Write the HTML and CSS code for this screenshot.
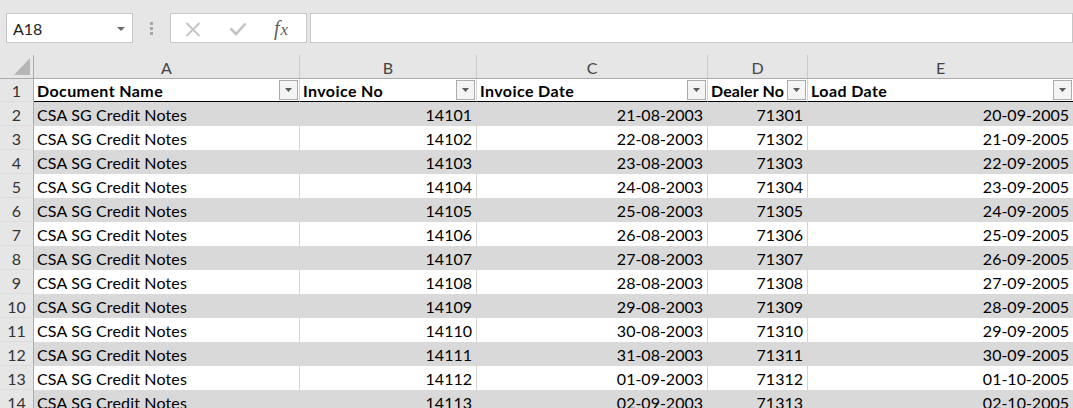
FILE: index.html
```html
<!DOCTYPE html>
<html>
<head>
<meta charset="utf-8">
<link rel="stylesheet" href="styles.css">
</head>
<body>
<div class="app">
  <div class="fbar">
    <div class="namebox">
      <span class="nb-text">A18</span>
      <svg class="nb-arrow" width="8" height="4" viewBox="0 0 8 4"><polygon points="0,0 8,0 4,4" fill="#6a6a6a"/></svg>
    </div>
    <div class="grip"><span></span><span></span><span></span></div>
    <div class="fbuttons">
      <svg class="ico-x" width="16" height="15" viewBox="0 0 16 15"><path d="M1.5 1 L14.5 14 M14.5 1 L1.5 14" stroke="#c3c3c3" stroke-width="1.8" fill="none"/></svg>
      <svg class="ico-check" width="18" height="14" viewBox="0 0 18 14"><path d="M1.5 6.5 L7 12 L16.5 1.5" stroke="#c3c3c3" stroke-width="2.6" fill="none"/></svg>
      <span class="fx"><span class="f">f</span><span class="x">x</span></span>
    </div>
    <div class="finput"></div>
  </div>

  <div class="sheet">
    <div class="corner"><svg width="16" height="17" viewBox="0 0 16 17"><polygon points="16,0 16,17 0,17" fill="#b6b6b6"/></svg></div>
    <div class="colhdr">A</div>
    <div class="colhdr">B</div>
    <div class="colhdr">C</div>
    <div class="colhdr">D</div>
    <div class="colhdr last">E</div>

    <div class="rowhdr r1">1</div>
    <div class="th"><span>Document Name</span><span class="flt"><svg width="7" height="4" viewBox="0 0 7 4"><polygon points="0,0 7,0 3.5,4" fill="#5c5c5c"/></svg></span></div>
    <div class="th"><span>Invoice No</span><span class="flt"><svg width="7" height="4" viewBox="0 0 7 4"><polygon points="0,0 7,0 3.5,4" fill="#5c5c5c"/></svg></span></div>
    <div class="th"><span>Invoice Date</span><span class="flt"><svg width="7" height="4" viewBox="0 0 7 4"><polygon points="0,0 7,0 3.5,4" fill="#5c5c5c"/></svg></span></div>
    <div class="th tight"><span>Dealer No</span><span class="flt"><svg width="7" height="4" viewBox="0 0 7 4"><polygon points="0,0 7,0 3.5,4" fill="#5c5c5c"/></svg></span></div>
    <div class="th last"><span>Load Date</span><span class="flt"><svg width="7" height="4" viewBox="0 0 7 4"><polygon points="0,0 7,0 3.5,4" fill="#5c5c5c"/></svg></span></div>

    <div class="rowhdr">2</div><div class="c g">CSA SG Credit Notes</div><div class="c g n">14101</div><div class="c g n">21-08-2003</div><div class="c g n">71301</div><div class="c g n last">20-09-2005</div>
    <div class="rowhdr">3</div><div class="c">CSA SG Credit Notes</div><div class="c n">14102</div><div class="c n">22-08-2003</div><div class="c n">71302</div><div class="c n last">21-09-2005</div>
    <div class="rowhdr">4</div><div class="c g">CSA SG Credit Notes</div><div class="c g n">14103</div><div class="c g n">23-08-2003</div><div class="c g n">71303</div><div class="c g n last">22-09-2005</div>
    <div class="rowhdr">5</div><div class="c">CSA SG Credit Notes</div><div class="c n">14104</div><div class="c n">24-08-2003</div><div class="c n">71304</div><div class="c n last">23-09-2005</div>
    <div class="rowhdr">6</div><div class="c g">CSA SG Credit Notes</div><div class="c g n">14105</div><div class="c g n">25-08-2003</div><div class="c g n">71305</div><div class="c g n last">24-09-2005</div>
    <div class="rowhdr">7</div><div class="c">CSA SG Credit Notes</div><div class="c n">14106</div><div class="c n">26-08-2003</div><div class="c n">71306</div><div class="c n last">25-09-2005</div>
    <div class="rowhdr">8</div><div class="c g">CSA SG Credit Notes</div><div class="c g n">14107</div><div class="c g n">27-08-2003</div><div class="c g n">71307</div><div class="c g n last">26-09-2005</div>
    <div class="rowhdr">9</div><div class="c">CSA SG Credit Notes</div><div class="c n">14108</div><div class="c n">28-08-2003</div><div class="c n">71308</div><div class="c n last">27-09-2005</div>
    <div class="rowhdr">10</div><div class="c g">CSA SG Credit Notes</div><div class="c g n">14109</div><div class="c g n">29-08-2003</div><div class="c g n">71309</div><div class="c g n last">28-09-2005</div>
    <div class="rowhdr">11</div><div class="c">CSA SG Credit Notes</div><div class="c n">14110</div><div class="c n">30-08-2003</div><div class="c n">71310</div><div class="c n last">29-09-2005</div>
    <div class="rowhdr">12</div><div class="c g">CSA SG Credit Notes</div><div class="c g n">14111</div><div class="c g n">31-08-2003</div><div class="c g n">71311</div><div class="c g n last">30-09-2005</div>
    <div class="rowhdr">13</div><div class="c">CSA SG Credit Notes</div><div class="c n">14112</div><div class="c n">01-09-2003</div><div class="c n">71312</div><div class="c n last">01-10-2005</div>
    <div class="rowhdr">14</div><div class="c g">CSA SG Credit Notes</div><div class="c g n">14113</div><div class="c g n">02-09-2003</div><div class="c g n">71313</div><div class="c g n last">02-10-2005</div>
  </div>
</div>
</body>
</html>
```
FILE: styles.css
```css
* { box-sizing: border-box; }
html, body {
  margin: 0;
  padding: 0;
  width: 1073px;
  height: 408px;
  overflow: hidden;
  background: #e6e6e6;
}
.app {
  font-family: "Lato", "Liberation Sans", sans-serif;
  font-size: 16px;
  color: #000;
}

/* formula bar */
.fbar {
  height: 55px;
  padding: 13px 0 0 6px;
  display: flex;
  align-items: flex-start;
}
.namebox {
  width: 127px;
  height: 30px;
  background: #fff;
  border: 1px solid #c6c6c6;
  display: flex;
  align-items: center;
  justify-content: space-between;
  padding: 1px 7px 0 6px;
  color: #222;
}
.grip {
  width: 37px;
  height: 30px;
  display: flex;
  flex-direction: column;
  align-items: center;
  justify-content: center;
  gap: 2px;
}
.grip span {
  width: 3px;
  height: 3px;
  background: #a8a8a8;
}
.fbuttons {
  width: 137px;
  height: 30px;
  background: #fff;
  border: 1px solid #c6c6c6;
  display: flex;
  align-items: center;
  padding-left: 14px;
  margin-right: 3px;
}
.ico-x { margin-top: 2px; }
.ico-check { margin-left: 28px; margin-top: 1px; }
.fx {
  margin-left: 27px;
  font-family: "Liberation Serif", serif;
  font-style: italic;
  color: #5e5e5e;
  display: flex;
  align-items: baseline;
  padding-top: 1px;
}
.fx .f { font-size: 20px; }
.fx .x { font-size: 17px; margin-left: 1px; }
.finput {
  flex: 1;
  height: 30px;
  background: #fff;
  border: 1px solid #c6c6c6;
}

/* sheet */
.sheet {
  display: grid;
  grid-template-columns: 34px 266px 177px 231px 100px 265px;
  grid-template-rows: 24px 23px repeat(13, 24px);
}
.corner {
  background: #e6e6e6;
  border-right: 1px solid #ababab;
  border-bottom: 1px solid #ababab;
  display: flex;
  align-items: flex-end;
  justify-content: flex-end;
  padding: 0 3px 3px 0;
}
.colhdr {
  background: #e6e6e6;
  border-right: 1px solid #cacaca;
  border-bottom: 1px solid #ababab;
  display: flex;
  align-items: center;
  justify-content: center;
  color: #444;
  padding-top: 1px;
}
.colhdr.last { border-right: none; }
.rowhdr {
  background: #e6e6e6;
  border-right: 1px solid #ababab;
  border-bottom: 1px solid #dcdcdc;
  display: flex;
  align-items: center;
  justify-content: center;
  color: #333;
  padding-top: 1px;
}
.th {
  background: #fff;
  border-right: 1px solid #d4d4d4;
  border-bottom: 1px solid #000;
  font-weight: 700;
  letter-spacing: 0.4px;
  display: flex;
  align-items: center;
  justify-content: space-between;
  padding: 0 1px 0 3px;
  white-space: nowrap;
}
.th > span:first-child { padding-top: 1px; }
.th.tight { letter-spacing: 0.1px; }
.th.last { border-right: none; padding-right: 1px; }
.flt {
  width: 19px;
  height: 20px;
  background: #f4f4f4;
  border: 1px solid #a9acb0;
  display: flex;
  align-items: center;
  justify-content: center;
  flex-shrink: 0;
}
.c {
  background: #fff;
  border-right: 1px solid #d4d4d4;
  display: flex;
  align-items: center;
  padding: 1px 3px 0;
  white-space: nowrap;
  letter-spacing: 0.15px;
}
.c.g {
  background: #d9d9d9;
  border-right-color: #d9d9d9;
}
.c.n { justify-content: flex-end; padding-right: 4px; letter-spacing: 0; }
.c.last { border-right: none; }
```
